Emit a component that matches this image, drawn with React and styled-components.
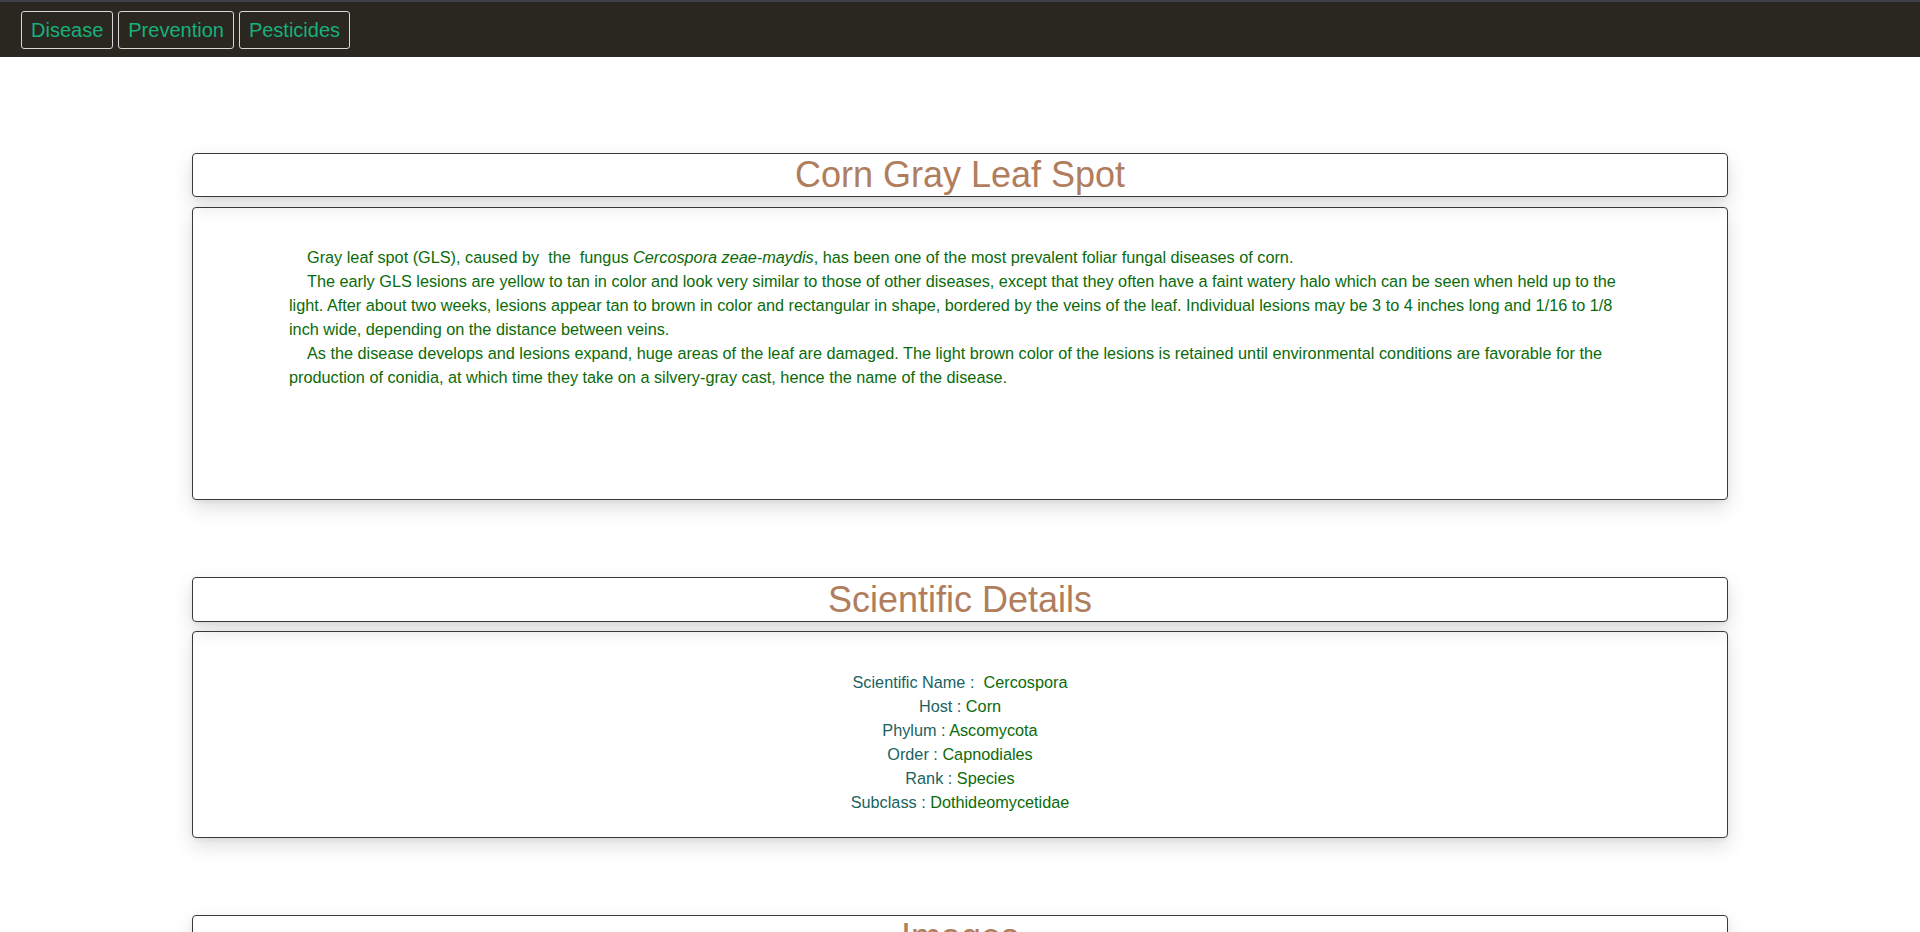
import React from "react";
import styled, { createGlobalStyle } from "styled-components";

const GlobalStyle = createGlobalStyle`
  body {
    margin: 0;
    background: #ffffff;
    font-family: "Liberation Sans", Arial, sans-serif;
  }
`;

const cardShadow = `
  box-shadow: 0 8px 20px 0 rgba(0, 0, 0, 0.13), 0 2px 5px 0 rgba(0, 0, 0, 0.06);
`;

const NavBar = styled.nav`
  display: flex;
  gap: 5px;
  height: 57px;
  box-sizing: border-box;
  padding: 9px 21px 0;
  border-top: 2px solid #3d4147;
  background-color: #29271f;
`;

const NavButton = styled.button`
  height: 38px;
  padding: 0 9px;
  border: 1px solid #d8d8d8;
  border-radius: 3px;
  background: transparent;
  color: #17b07b;
  font-family: "Liberation Sans", Arial, sans-serif;
  font-size: 20px;
  cursor: pointer;
`;

const Main = styled.main`
  display: flex;
  flex-direction: column;
  gap: 77px;
  padding: 96px 0 80px;
`;

const Section = styled.section`
  width: 80%;
  margin: 0 auto;
  display: flex;
  flex-direction: column;
  gap: ${(props) => props.gap || 10}px;
`;

const TitleBox = styled.div`
  border: 1px solid #343a40;
  border-radius: 4px;
  ${cardShadow}
  text-align: center;
  font-size: 36px;
  line-height: ${(props) => props.lineHeight || 42}px;
  color: #b07d5d;
`;

const ContentBox = styled.div`
  border: 1px solid #343a40;
  border-radius: 4px;
  ${cardShadow}
  box-sizing: border-box;
  height: ${(props) => props.height}px;
  padding: ${(props) => props.top || 37}px 96px 0;
  font-size: 16.25px;
  line-height: 24px;
`;

const Para = styled.p`
  margin: 0;
  text-indent: 18px;
  color: #0a6b0a;
`;

const DetailRow = styled.div`
  text-align: center;
  color: #1a6262;
`;

const Value = styled.span`
  color: #0a6b0a;
`;

const details = [
  ["Scientific Name :  ", "Cercospora"],
  ["Host : ", "Corn"],
  ["Phylum : ", "Ascomycota"],
  ["Order : ", "Capnodiales"],
  ["Rank : ", "Species"],
  ["Subclass : ", "Dothideomycetidae"],
];

export default function App() {
  return (
    <>
      <GlobalStyle />
      <NavBar>
        <NavButton>Disease</NavButton>
        <NavButton>Prevention</NavButton>
        <NavButton>Pesticides</NavButton>
      </NavBar>
      <Main>
        <Section>
          <TitleBox>Corn Gray Leaf Spot</TitleBox>
          <ContentBox height={293}>
            <Para>
              Gray leaf spot (GLS), caused by{"\u00a0"} the{"\u00a0"} fungus{" "}
              <i>Cercospora zeae-maydis</i>, has been one of the most prevalent
              foliar fungal diseases of corn.
            </Para>
            <Para>
              The early GLS lesions are yellow to tan in color and look very
              similar to those of other diseases, except that they often have a
              faint watery halo which can be seen when held up to the light.
              After about two weeks, lesions appear tan to brown in color and
              rectangular in shape, bordered by the veins of the leaf.
              Individual lesions may be 3 to 4 inches long and 1/16 to 1/8 inch
              wide, depending on the distance between veins.
            </Para>
            <Para>
              As the disease develops and lesions expand, huge areas of the leaf
              are damaged. The light brown color of the lesions is retained
              until environmental conditions are favorable for the production of
              conidia, at which time they take on a silvery-gray cast, hence the
              name of the disease.
            </Para>
          </ContentBox>
        </Section>
        <Section gap={9}>
          <TitleBox lineHeight={43}>Scientific Details</TitleBox>
          <ContentBox height={207} top={38}>
            {details.map(([label, value]) => (
              <DetailRow key={label}>
                {label.replace("  ", " \u00a0")}
                <Value>{value}</Value>
              </DetailRow>
            ))}
          </ContentBox>
        </Section>
        <Section>
          <TitleBox>Images</TitleBox>
          <ContentBox height={400} />
        </Section>
      </Main>
    </>
  );
}
